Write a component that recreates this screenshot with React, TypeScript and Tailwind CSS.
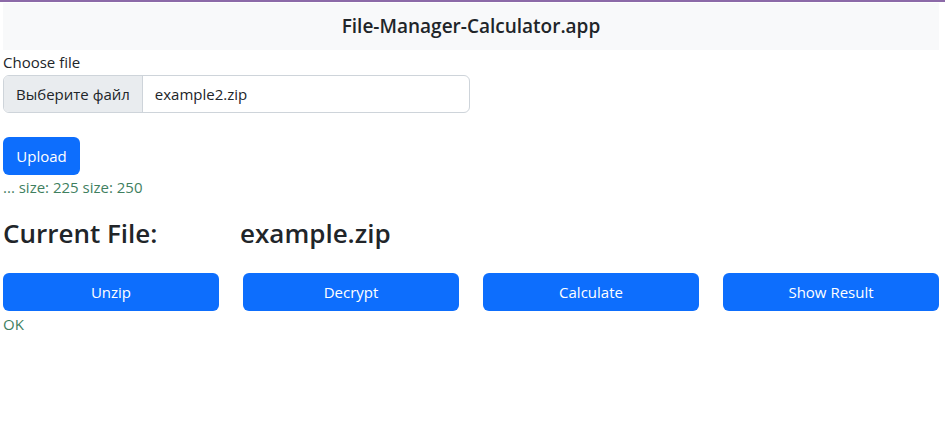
import React from 'react';

const actions = ['Unzip', 'Decrypt', 'Calculate', 'Show Result'];

export default function App() {
  return (
    <div className="min-h-[431px] bg-white border-t-2 border-[#8c6aa8] text-[#212529] font-['Open_Sans',sans-serif]">
      <div className="w-[936px] ml-[3px]">
        <header className="mt-[1px] h-[47px] bg-[#f8f9fa] flex items-center justify-center">
          <h1 className="text-[19px] font-semibold">File-Manager-Calculator.app</h1>
        </header>

        <label className="block mt-[1px] text-[15px] leading-[22px]">Choose file</label>
        <div className="mt-[2px] w-[467px] h-[38px] flex border border-[#ced4da] rounded-[6px] overflow-hidden text-[15px]">
          <span className="px-3 flex items-center bg-[#e9ecef] border-r border-[#ced4da]">Выберите файл</span>
          <span className="px-3 flex items-center">example2.zip</span>
        </div>

        <button className="mt-[24px] h-[38px] w-[77px] rounded-[6px] bg-[#0d6efd] text-white text-[15px]">Upload</button>
        <p className="mt-[1px] text-[#3f7f5f] text-[15px] leading-[22px]">... size: 225 size: 250</p>

        <div className="mt-[17px] flex text-[26px] font-semibold leading-[36px]">
          <span className="w-[237px]">Current File:</span>
          <span>example.zip</span>
        </div>

        <div className="mt-[22px] grid grid-cols-4 gap-6">
          {actions.map((a) => (
            <button key={a} className="h-[38px] rounded-[6px] bg-[#0d6efd] text-white text-[15px]">
              {a}
            </button>
          ))}
        </div>
        <p className="mt-[2px] text-[#3f7f5f] text-[15px] leading-[22px]">OK</p>
      </div>
    </div>
  );
}
